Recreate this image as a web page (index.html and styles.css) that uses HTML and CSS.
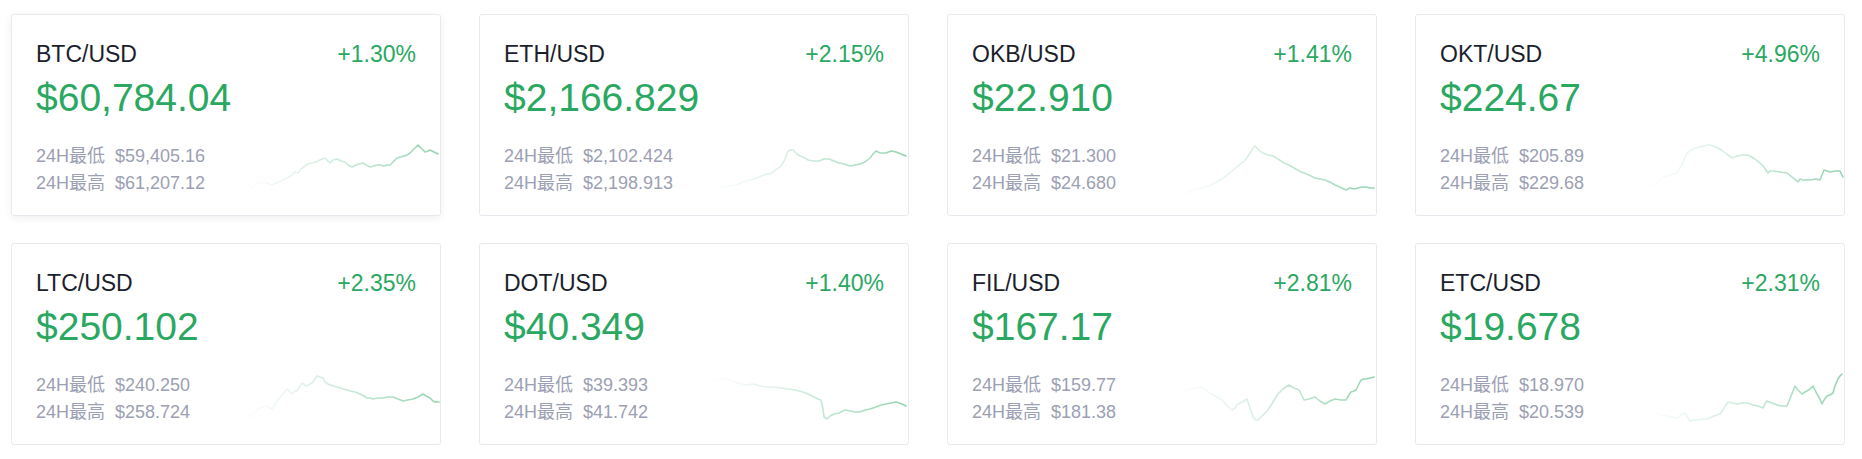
FILE: index.html
```html
<!DOCTYPE html>
<html lang="zh-CN">
<head>
<meta charset="utf-8">
<title>Markets</title>
<link rel="stylesheet" href="styles.css">
</head>
<body>
<svg class="defs" aria-hidden="true">
  <defs>
    <linearGradient id="spark" x1="0" y1="0" x2="1" y2="0">
      <stop offset="0" stop-color="#2aa862" stop-opacity="0"/>
      <stop offset="0.2" stop-color="#2aa862" stop-opacity="0.08"/>
      <stop offset="1" stop-color="#2aa862" stop-opacity="0.5"/>
    </linearGradient>
  </defs>
</svg>
<main class="grid">
  <section class="card card-active">
    <div class="head"><span class="pair">BTC/USD</span><span class="chg">+1.30%</span></div>
    <div class="price">$60,784.04</div>
    <div class="bottom">
      <div class="stats">
        <div class="row"><span class="lbl">24H最低</span><span class="val">$59,405.16</span></div>
        <div class="row"><span class="lbl">24H最高</span><span class="val">$61,207.12</span></div>
      </div>
      <svg class="spark" viewBox="0 0 200 52" width="200" height="52"><polyline points="0,34 5,37 9,41 12,44 15,41 17,39 20,40 23,38 27,39 32,41 36,39 40,38 43,36 47,34 51,32 55,28 58,29 61,25 65,22 68,20 72,19 76,18 80,16 85,14 88,17 90,19 93,16 97,15 101,17 105,18 108,21 112,23 116,21 119,20 123,19 126,21 130,23 134,22 137,21 140,21 144,22 147,21 150,21 153,18 157,14 161,13 164,12 167,11 170,9 172,7 175,4 178,1 181,4 185,8 188,7 190,6 194,8 198,10"/></svg>
    </div>
  </section>
  <section class="card">
    <div class="head"><span class="pair">ETH/USD</span><span class="chg">+2.15%</span></div>
    <div class="price">$2,166.829</div>
    <div class="bottom">
      <div class="stats">
        <div class="row"><span class="lbl">24H最低</span><span class="val">$2,102.424</span></div>
        <div class="row"><span class="lbl">24H最高</span><span class="val">$2,198.913</span></div>
      </div>
      <svg class="spark" viewBox="0 0 200 52" width="200" height="52"><polyline points="0,44 7,46 14,43 21,42 28,41 35,38 42,36 49,34 56,31 64,29 69,25 74,21 77,15 80,7 83,6 85,6 88,9 90,11 95,13 100,16 105,17 111,17 116,15 121,15 126,17 131,19 136,20 142,22 147,21 152,20 157,18 162,14 165,10 168,7 172,9 178,9 183,7 188,8 193,10 198,12"/></svg>
    </div>
  </section>
  <section class="card">
    <div class="head"><span class="pair">OKB/USD</span><span class="chg">+1.41%</span></div>
    <div class="price">$22.910</div>
    <div class="bottom">
      <div class="stats">
        <div class="row"><span class="lbl">24H最低</span><span class="val">$21.300</span></div>
        <div class="row"><span class="lbl">24H最高</span><span class="val">$24.680</span></div>
      </div>
      <svg class="spark" viewBox="0 0 200 52" width="200" height="52"><polyline points="0,47 9,49 18,46 26,44 35,41 42,37 49,33 56,27 62,22 67,18 71,14 74,9 77,4 79,2 82,5 85,8 87,9 92,11 97,12 102,15 108,19 113,21 118,24 123,27 128,29 133,31 139,34 144,35 149,36 154,38 159,41 164,43 170,46 174,44 178,45 182,44 186,43 190,43 194,44 198,44"/></svg>
    </div>
  </section>
  <section class="card">
    <div class="head"><span class="pair">OKT/USD</span><span class="chg">+4.96%</span></div>
    <div class="price">$224.67</div>
    <div class="bottom">
      <div class="stats">
        <div class="row"><span class="lbl">24H最低</span><span class="val">$205.89</span></div>
        <div class="row"><span class="lbl">24H最高</span><span class="val">$229.68</span></div>
      </div>
      <svg class="spark" viewBox="0 0 200 52" width="200" height="52"><polyline points="1,29 5,36 9,44 14,38 19,33 26,31 33,29 38,20 43,9 46,7 49,5 55,3 60,2 63,1 66,1 69,2 74,4 79,7 84,11 88,14 93,12 99,11 103,11 106,12 111,15 116,19 120,23 124,29 126,27 129,27 136,28 143,29 148,33 154,38 156,35 159,36 166,36 172,35 176,36 178,31 180,26 183,27 186,28 191,27 196,27 199,33"/></svg>
    </div>
  </section>
  <section class="card">
    <div class="head"><span class="pair">LTC/USD</span><span class="chg">+2.35%</span></div>
    <div class="price">$250.102</div>
    <div class="bottom">
      <div class="stats">
        <div class="row"><span class="lbl">24H最低</span><span class="val">$240.250</span></div>
        <div class="row"><span class="lbl">24H最高</span><span class="val">$258.724</span></div>
      </div>
      <svg class="spark" viewBox="0 0 200 52" width="200" height="52"><polyline points="0,23 5,33 10,45 14,40 18,36 23,34 27,33 30,35 32,36 35,31 37,28 42,22 47,16 50,19 52,21 55,18 57,18 60,13 62,10 65,12 67,13 70,11 72,10 75,6 77,3 80,4 83,5 85,9 88,11 91,12 93,13 98,14 103,16 107,17 110,18 115,19 120,21 124,23 127,25 130,25 133,26 138,25 143,25 148,24 153,24 158,26 163,28 168,27 173,26 178,24 183,21 186,23 190,25 193,28 195,29 199,29"/></svg>
    </div>
  </section>
  <section class="card">
    <div class="head"><span class="pair">DOT/USD</span><span class="chg">+1.40%</span></div>
    <div class="price">$40.349</div>
    <div class="bottom">
      <div class="stats">
        <div class="row"><span class="lbl">24H最低</span><span class="val">$39.393</span></div>
        <div class="row"><span class="lbl">24H最高</span><span class="val">$41.742</span></div>
      </div>
      <svg class="spark" viewBox="0 0 200 52" width="200" height="52"><polyline points="0,8 7,7 12,6 18,6 24,8 30,10 38,12 45,11 52,13 59,14 66,14 73,15 80,16 87,17 95,19 100,21 106,24 110,26 113,27 115,36 116,44 119,46 122,43 126,41 131,40 137,37 142,38 147,39 152,39 157,37 162,36 168,34 173,32 178,31 183,30 188,29 191,30 194,31 198,33"/></svg>
    </div>
  </section>
  <section class="card">
    <div class="head"><span class="pair">FIL/USD</span><span class="chg">+2.81%</span></div>
    <div class="price">$167.17</div>
    <div class="bottom">
      <div class="stats">
        <div class="row"><span class="lbl">24H最低</span><span class="val">$159.77</span></div>
        <div class="row"><span class="lbl">24H最高</span><span class="val">$181.38</span></div>
      </div>
      <svg class="spark" viewBox="0 0 200 52" width="200" height="52"><polyline points="0,22 8,18 16,16 25,14 30,17 35,21 41,24 46,27 51,33 56,37 59,35 61,32 66,29 71,26 74,35 77,44 80,47 82,47 87,42 92,37 97,29 102,21 107,16 113,12 118,15 123,17 126,23 128,27 133,26 139,24 144,28 149,31 154,28 159,26 165,27 170,27 173,22 175,19 178,18 180,17 183,11 185,7 188,6 190,6 194,5 198,4"/></svg>
    </div>
  </section>
  <section class="card">
    <div class="head"><span class="pair">ETC/USD</span><span class="chg">+2.31%</span></div>
    <div class="price">$19.678</div>
    <div class="bottom">
      <div class="stats">
        <div class="row"><span class="lbl">24H最低</span><span class="val">$18.970</span></div>
        <div class="row"><span class="lbl">24H最高</span><span class="val">$20.539</span></div>
      </div>
      <svg class="spark" viewBox="0 0 200 52" width="200" height="52"><polyline points="1,28 5,34 9,40 16,42 23,43 28,44 33,45 37,42 41,40 44,45 46,48 50,47 53,47 58,46 63,46 70,43 76,41 80,35 84,29 88,30 93,31 98,30 103,30 106,31 109,32 114,33 119,35 121,31 123,28 128,30 133,32 138,33 143,33 147,23 151,13 154,17 158,21 161,19 163,18 166,16 169,13 171,17 173,21 176,26 178,31 180,27 183,23 186,22 189,20 191,13 194,6 196,3 198,1"/></svg>
    </div>
  </section>
</main>
</body>
</html>
```
FILE: styles.css
```css
html, body {
  margin: 0;
  padding: 0;
  background: #ffffff;
}

body {
  font-family: "Liberation Sans", Arial, "Noto Sans CJK SC", sans-serif;
  color: #1b1e2c;
}

.defs {
  position: absolute;
  width: 0;
  height: 0;
  overflow: hidden;
}

.grid {
  display: grid;
  grid-template-columns: repeat(4, 430px);
  column-gap: 38px;
  row-gap: 27px;
  padding: 14px 0 0 11px;
}

.card {
  box-sizing: border-box;
  border: 1px solid #e8e9ef;
  border-radius: 3px;
  padding: 24px 24px 18px;
  background: #ffffff;
}

.card-active {
  box-shadow: 0 2px 8px rgba(30, 40, 70, 0.07);
}

.head {
  display: flex;
  justify-content: space-between;
  align-items: baseline;
  font-size: 23px;
  line-height: 30px;
}

.pair {
  color: #1b1e2c;
}

.chg {
  color: #2aa862;
}

.price {
  margin-top: 5px;
  font-size: 39px;
  line-height: 48px;
  color: #2aa862;
}

.bottom {
  display: flex;
  align-items: center;
  margin-top: 21px;
}

.stats {
  font-size: 18px;
  line-height: 27px;
  color: #9ca0b3;
}

.row {
  display: flex;
  white-space: nowrap;
}

.lbl {
  font-family: "Liberation Sans", Arial, "Noto Sans CJK SC", sans-serif;
}

.val {
  margin-left: 10px;
}

.spark {
  display: block;
  flex: none;
  margin-left: auto;
  margin-right: -24px;
}

.spark polyline {
  fill: none;
  stroke: url(#spark);
  stroke-width: 1.6;
  stroke-linejoin: round;
  stroke-linecap: round;
}
```
